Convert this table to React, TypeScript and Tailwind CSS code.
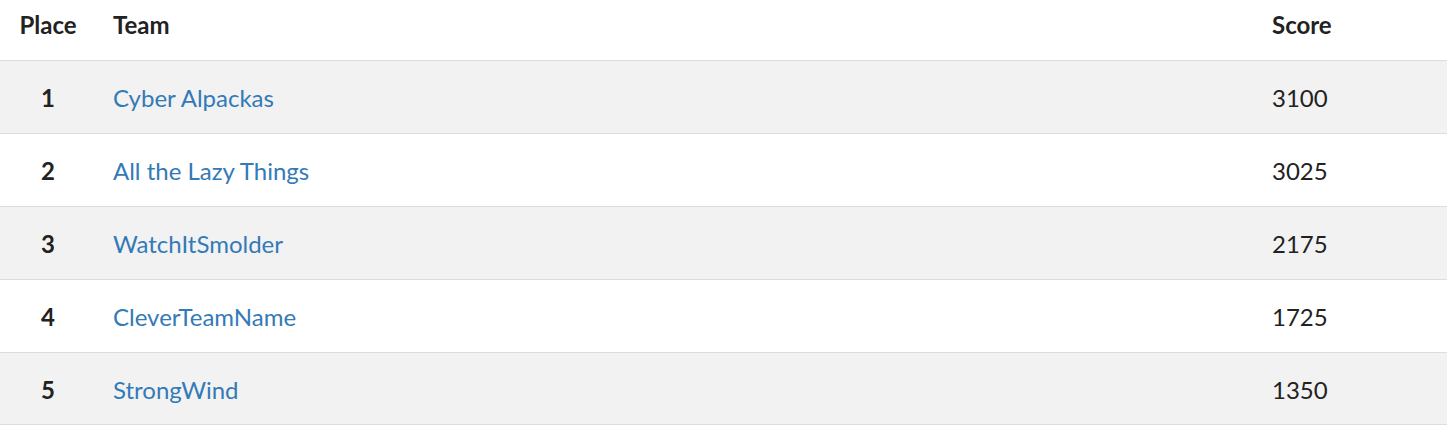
import React from "react";

const rows = [
  { place: 1, team: "Cyber Alpackas", score: 3100 },
  { place: 2, team: "All the Lazy Things", score: 3025 },
  { place: 3, team: "WatchItSmolder", score: 2175 },
  { place: 4, team: "CleverTeamName", score: 1725 },
  { place: 5, team: "StrongWind", score: 1350 },
];

export default function App() {
  return (
    <div className="w-[1447px] bg-white text-[#222] font-['Lato','Liberation_Sans',sans-serif] text-[24px] leading-[36px]">
      <div className="flex h-[60px] items-start pt-[7px] font-bold">
        <div className="w-[96px] text-center">Place</div>
        <div className="flex-1 pl-[17px]">Team</div>
        <div className="w-[175px]">Score</div>
      </div>
      {rows.map((r, i) => (
        <div
          key={r.place}
          className={`flex h-[73px] items-center pt-[2px] border-t border-[#dddddd] ${i % 2 === 0 ? "bg-[#f2f2f2]" : "bg-white"} ${i === rows.length - 1 ? "border-b" : ""}`}
        >
          <div className="w-[96px] text-center font-bold">{r.place}</div>
          <div className="flex-1 pl-[17px]">
            <a className="text-[#337ab7]" href="#">{r.team}</a>
          </div>
          <div className="w-[175px]">{r.score}</div>
        </div>
      ))}
    </div>
  );
}
